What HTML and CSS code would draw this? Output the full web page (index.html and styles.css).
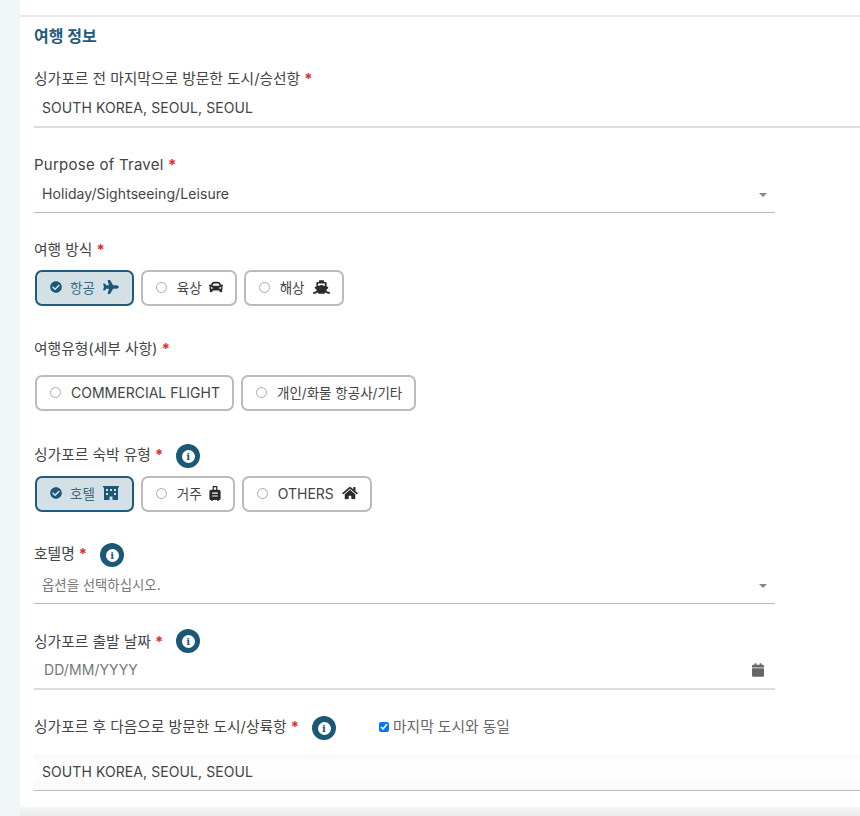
FILE: index.html
```html
<!DOCTYPE HTML>
<html lang="ko">
<head>
	<meta charset="UTF-8" />
	<title>여행 정보</title>
	<link rel="stylesheet" href="styles.css">
</head>
<body>
	<div class="prevPanel"></div>
	<div class="panel">
		<h2 class="title">여행 정보</h2>

		<div class="label lastCity">싱가포르 전 마지막으로 방문한 도시/승선항 <span class="req">*</span></div>
		<div class="input full thick">SOUTH KOREA, SEOUL, SEOUL</div>

		<div class="label purpose">Purpose of Travel <span class="req">*</span></div>
		<div class="input short">Holiday/Sightseeing/Leisure<span class="caret"></span></div>

		<div class="label mode">여행 방식 <span class="req">*</span></div>
		<div class="choices">
			<div class="choice on">
				<svg class="check" viewBox="0 0 512 512"><path d="M504 256c0 136.967-111.033 248-248 248S8 392.967 8 256 119.033 8 256 8s248 111.033 248 248zM227.314 387.314l184-184c6.248-6.248 6.248-16.379 0-22.627l-22.627-22.627c-6.248-6.249-16.379-6.249-22.628 0L216 308.118l-70.059-70.059c-6.248-6.248-16.379-6.248-22.628 0l-22.627 22.627c-6.248 6.248-6.248 16.379 0 22.627l104 104c6.249 6.249 16.379 6.249 22.628.001z"/></svg>
				항공
				<svg class="ico plane" viewBox="0 0 576 512"><path d="M480 192H365.71L260.61 8.06A16.014 16.014 0 0 0 246.71 0h-65.5c-10.63 0-18.3 10.17-15.38 20.39L214.86 192H112l-43.2-57.6c-3.02-4.03-7.77-6.4-12.8-6.4H16.01C5.6 128-2.04 137.78.49 147.88L32 256 .49 364.12C-2.04 374.22 5.6 384 16.01 384H56c5.04 0 9.78-2.37 12.8-6.4L112 320h102.86l-49.03 171.6c-2.92 10.22 4.75 20.4 15.38 20.4h65.5c5.74 0 11.04-3.08 13.89-8.06L365.71 320H480c35.35 0 96-28.65 96-64s-60.65-64-96-64z"/></svg>
			</div>
			<div class="choice">
				<span class="radio"></span>
				육상
				<svg class="ico car" viewBox="0 0 512 512"><path d="M499.99 176h-59.87l-16.64-41.6C406.38 91.63 365.57 64 319.5 64h-127c-46.06 0-86.88 27.63-103.99 70.4L71.87 176H12.01C4.2 176-1.53 183.34.37 190.91l6 24C7.7 220.25 12.5 224 18.01 224h20.07C24.65 235.73 16 252.78 16 272v48c0 16.12 6.16 30.67 16 41.93V416c0 17.67 14.33 32 32 32h32c17.67 0 32-14.33 32-32v-32h256v32c0 17.67 14.33 32 32 32h32c17.67 0 32-14.33 32-32v-54.07c9.84-11.25 16-25.8 16-41.93v-48c0-19.22-8.65-36.27-22.07-48H494c5.51 0 10.31-3.75 11.64-9.09l6-24c1.89-7.57-3.84-14.91-11.65-14.91zm-352.06-17.83c7.29-18.22 24.94-30.17 44.57-30.17h127c19.63 0 37.28 11.95 44.57 30.17L384 208H128l19.93-49.83zM96 319.8c-19.2 0-32-12.76-32-31.9S76.8 256 96 256s48 28.71 48 47.85-28.8 15.95-48 15.95zm320 0c-19.2 0-48 3.19-48-15.95S396.8 256 416 256s32 12.76 32 31.9-12.8 31.9-32 31.9z"/></svg>
			</div>
			<div class="choice">
				<span class="radio"></span>
				해상
				<svg class="ico ship" viewBox="0 0 640 512"><path d="M496.616 372.639l70.012-70.012c16.899-16.9 9.942-45.771-12.836-53.092L512 236.102V96c0-17.673-14.327-32-32-32h-64V24c0-13.255-10.745-24-24-24H248c-13.255 0-24 10.745-24 24v40h-64c-17.673 0-32 14.327-32 32v140.102l-41.792 13.433c-22.753 7.313-29.754 36.173-12.836 53.092l70.012 70.012C125.828 416.287 85.587 448 24 448c-13.255 0-24 10.745-24 24v16c0 13.255 10.745 24 24 24 61.023 0 107.499-20.61 143.258-59.396C181.677 487.432 216.021 512 256 512h128c39.979 0 74.323-24.568 88.742-59.396C508.495 491.384 554.968 512 616 512c13.255 0 24-10.745 24-24v-16c0-13.255-10.745-24-24-24-60.817 0-101.542-31.001-119.384-75.361zM192 128h256v87.177l-118.222-38.002a31.995 31.995 0 0 0-19.556 0L192 215.177V128z"/></svg>
			</div>
		</div>

		<div class="label kind">여행유형(세부 사항) <span class="req">*</span></div>
		<div class="choices">
			<div class="choice latin"><span class="radio"></span>COMMERCIAL FLIGHT</div>
			<div class="choice"><span class="radio"></span>개인/화물 항공사/기타</div>
		</div>

		<div class="label withInfo stay">싱가포르 숙박 유형 <span class="req">*</span><span class="info"><b>i</b></span></div>
		<div class="choices">
			<div class="choice on">
				<svg class="check" viewBox="0 0 512 512"><path d="M504 256c0 136.967-111.033 248-248 248S8 392.967 8 256 119.033 8 256 8s248 111.033 248 248zM227.314 387.314l184-184c6.248-6.248 6.248-16.379 0-22.627l-22.627-22.627c-6.248-6.249-16.379-6.249-22.628 0L216 308.118l-70.059-70.059c-6.248-6.248-16.379-6.248-22.628 0l-22.627 22.627c-6.248 6.248-6.248 16.379 0 22.627l104 104c6.249 6.249 16.379 6.249 22.628.001z"/></svg>
				호텔
				<svg class="ico hotel" viewBox="0 0 16 14"><path fill-rule="evenodd" d="M0 0h16v1.500h-1V14H9.500v-3.500h-3V14H1V1.500H0zM3 3v2h2V3zm4 0v2h2V3zm4 0v2h2V3zM3 7v2h2V7zm8 0v2h2V7z"/></svg>
			</div>
			<div class="choice">
				<span class="radio"></span>
				거주
				<svg class="ico bag" viewBox="0 0 12 16"><path fill-rule="evenodd" d="M3.500 0h5v4H10a2 2 0 0 1 2 2v7a2 2 0 0 1-2 2v1H8.500v-1h-5v1H2v-1a2 2 0 0 1-2-2V6a2 2 0 0 1 2-2h1.500zM4.800 1.300V4h2.400V1.300zM3 7v1.200h6V7zm0 3v1.200h6V10z"/></svg>
			</div>
			<div class="choice latin">
				<span class="radio"></span>
				OTHERS
				<svg class="ico home" viewBox="0 0 576 512"><path d="M280.37 148.26L96 300.11V464a16 16 0 0 0 16 16l112.06-.29a16 16 0 0 0 15.92-16V368a16 16 0 0 1 16-16h64a16 16 0 0 1 16 16v95.64a16 16 0 0 0 16 16.05L464 480a16 16 0 0 0 16-16V300L295.67 148.26a12.19 12.19 0 0 0-15.3 0zM571.6 251.47L488 182.56V44.05a12 12 0 0 0-12-12h-56a12 12 0 0 0-12 12v72.61L318.47 43a48 48 0 0 0-61 0L4.34 251.47a12 12 0 0 0-1.6 16.9l25.5 31A12 12 0 0 0 45.15 301l235.22-193.74a12.19 12.19 0 0 1 15.3 0L530.9 301a12 12 0 0 0 16.9-1.6l25.5-31a12 12 0 0 0-1.7-16.93z"/></svg>
			</div>
		</div>

		<div class="label withInfo hotelName">호텔명 <span class="req">*</span><span class="info"><b>i</b></span></div>
		<div class="input short muted hint">옵션을 선택하십시오.<span class="caret"></span></div>

		<div class="label withInfo departure">싱가포르 출발 날짜 <span class="req">*</span><span class="info"><b>i</b></span></div>
		<div class="input short thick muted date">DD/MM/YYYY
			<svg class="cal" viewBox="0 0 448 512"><path d="M12 192h424c6.600 0 12 5.400 12 12v260c0 26.500-21.500 48-48 48H48c-26.500 0-48-21.500-48-48V204c0-6.600 5.400-12 12-12zm436-44v-36c0-26.500-21.500-48-48-48h-48V12c0-6.600-5.400-12-12-12h-40c-6.600 0-12 5.400-12 12v52H160V12c0-6.600-5.400-12-12-12h-40c-6.600 0-12 5.400-12 12v52H48C21.500 64 0 85.500 0 112v36c0 6.600 5.400 12 12 12h424c6.600 0 12-5.400 12-12z"/></svg>
		</div>

		<div class="label withInfo nextCity">싱가포르 후 다음으로 방문한 도시/상륙항 <span class="req">*</span><span class="info"><b>i</b></span>
			<label class="same"><input type="checkbox" checked>마지막 도시와 동일</label>
		</div>
		<div class="input full locked">SOUTH KOREA, SEOUL, SEOUL</div>
	</div>
	<div class="nextPanel"></div>
</body>
</html>
```

FILE: styles.css
```css
html, body {
	margin: 0;
	height: 816px;
	overflow: hidden;
}
body {
	background: #f1f6f7;
	font-family: Inter, "Noto Sans CJK KR", sans-serif;
	font-size: 14px;
	color: #444;
}

.prevPanel {
	margin-left: 20px;
	height: 15px;
	background: #fff;
}
.panel {
	margin-left: 20px;
	height: 781px;
	padding: 9px 0 0 14px;
	background: #fff;
	border-top: 2px solid #e8e8e8;
}
.nextPanel {
	margin-left: 20px;
	height: 9px;
	background: linear-gradient(#f6f6f6, #e9ecec);
}

.title {
	margin: 0;
	font-size: 16px;
	line-height: 21px;
	font-weight: 700;
	color: #1f5b7c;
}

.label {
	height: 20px;
	font-size: 14.75px;
	line-height: 22px;
	color: #444;
}
.req {
	color: #e32b2b;
	font-weight: 700;
}
.lastCity { margin-top: 21px; }
.purpose { margin-top: 26px; font-size: 15px; letter-spacing: .25px; }
.mode { margin-top: 26px; }
.kind { margin-top: 32px; }
.stay { margin-top: 33px; }
.hotelName { margin-top: 31px; }
.departure { margin-top: 25px; line-height: 26px; }
.nextCity { margin-top: 26px; margin-bottom: 14px; }

.withInfo {
	display: flex;
	align-items: flex-start;
	height: 24px;
	white-space: pre;
}

.info {
	display: flex;
	align-items: center;
	justify-content: center;
	width: 24px;
	height: 24px;
	margin-left: 13px;
	border-radius: 50%;
	background: #1a5876;
}
.info b {
	display: block;
	width: 13px;
	height: 13px;
	border-radius: 50%;
	background: #fff;
	color: #1a5876;
	font: 700 10px/13px "DejaVu Serif", serif;
	text-align: center;
}

.input {
	display: flex;
	align-items: center;
	position: relative;
	height: 34px;
	margin-top: 2px;
	padding: 0 0 2px 8px;
	border-bottom: 1px solid #bbb;
	letter-spacing: .08px;
	color: #444;
}
.short { width: 733px; }
.thick { border-bottom: 2px solid #ddd; }
.muted { color: #777; }
.hint { margin-top: 0; font-size: 13.4px; letter-spacing: 0; }
.date { margin-top: -1px; padding-left: 10px; width: 731px; }
.locked {
	margin-top: 0;
	background: linear-gradient(#fafafa 6px, #fdfdfd 6px, #fdfdfd 28px, #fafafa 28px);
}

.caret {
	position: absolute;
	right: 8px;
	top: 17px;
	border: 4px solid transparent;
	border-top: 4px solid #888;
	border-bottom: 0;
}
.cal {
	position: absolute;
	right: 11px;
	top: 11px;
	width: 12px;
	height: 14px;
	fill: #666;
}

.choices {
	display: flex;
	gap: 7px;
	margin: 11px 0 0 1px;
}
.kind + .choices { margin-top: 17px; }
.withInfo + .choices { margin-top: 8px; }

.choice {
	display: flex;
	align-items: center;
	height: 30px;
	padding: 0 12px 2px 13px;
	border: 2px solid #bbb;
	border-radius: 7px;
	background: #fff;
	font-size: 13.5px;
	white-space: nowrap;
	color: #444;
}
.choice.latin { font-size: 14px; }
.choice.on {
	padding-right: 13px;
	background: #d3e1e7;
	border-color: #1f5b7c;
	color: #3a6a84;
}

.radio {
	width: 9px;
	height: 9px;
	margin-right: 10px;
	border: 1.5px solid #aaa;
	border-radius: 50%;
}
.check {
	width: 12px;
	height: 12px;
	margin-right: 8px;
	fill: #1a5876;
}

.ico {
	margin-left: 7px;
	height: 14px;
	fill: #2b2b2b;
}
.on .ico { fill: #1a5876; margin-left: 8px; }
.plane { width: 16px; }
.car { width: 14px; }
.ship { width: 17px; margin-left: 8px; }
.hotel { width: 16px; }
.bag { width: 12px; height: 15px; }
.home { width: 16px; margin-left: 8px; }

.same {
	display: flex;
	align-items: center;
	margin-left: 43px;
	color: #666;
}
.same input {
	width: 10px;
	height: 10px;
	margin: 0 4px 0 0;
}
```
